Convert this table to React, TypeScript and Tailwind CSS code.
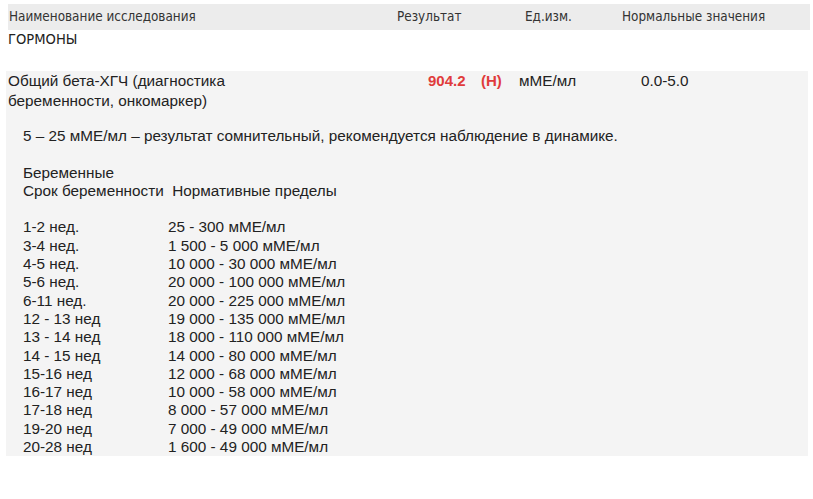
import React from "react";

const rows: [string, string][] = [
  ["1-2 нед.", "25 - 300 мМЕ/мл"],
  ["3-4 нед.", "1 500 - 5 000 мМЕ/мл"],
  ["4-5 нед.", "10 000 - 30 000 мМЕ/мл"],
  ["5-6 нед.", "20 000 - 100 000 мМЕ/мл"],
  ["6-11 нед.", "20 000 - 225 000 мМЕ/мл"],
  ["12 - 13 нед", "19 000 - 135 000 мМЕ/мл"],
  ["13 - 14 нед", "18 000 - 110 000 мМЕ/мл"],
  ["14 - 15 нед", "14 000 - 80 000 мМЕ/мл"],
  ["15-16 нед", "12 000 - 68 000 мМЕ/мл"],
  ["16-17 нед", "10 000 - 58 000 мМЕ/мл"],
  ["17-18 нед", "8 000 - 57 000 мМЕ/мл"],
  ["19-20 нед", "7 000 - 49 000 мМЕ/мл"],
  ["20-28 нед", "1 600 - 49 000 мМЕ/мл"],
];

export default function App() {
  const narrow = { fontFamily: '"DejaVu Sans Condensed", "Liberation Sans Narrow", sans-serif' };
  return (
    <div className="w-[813px] h-[499px] bg-white pt-[4px] text-[#222]">
      <div
        className="ml-[8px] w-[802px] h-[26px] bg-[#ececec] flex items-center text-[13.4px] text-[#333]"
        style={narrow}
      >
        <div className="w-[389px] pl-[1px]">Наименование исследования</div>
        <div className="w-[128px]">Результат</div>
        <div className="w-[97px]">Ед.изм.</div>
        <div>Нормальные значения</div>
      </div>
      <div className="pl-[8px] h-[18px] leading-[18px] text-[14.6px]" style={narrow}>
        ГОРМОНЫ
      </div>
      <div
        className="mt-[23px] ml-[6px] w-[802px] h-[385px] bg-[#f4f4f4] text-[15.3px]"
        style={{ fontFamily: '"Liberation Sans", Arial, sans-serif' }}
      >
        <div className="flex leading-[20px]">
          <div className="w-[422px] pl-[2px]">
            Общий бета-ХГЧ (диагностика
            <br />
            беременности, онкомаркер)
          </div>
          <div className="w-[91px] flex font-bold text-[#e03b3b] text-[15px]">
            <span className="w-[53px]">904.2</span>
            <span>(Н)</span>
          </div>
          <div className="w-[122px]">мМЕ/мл</div>
          <div>0.0-5.0</div>
        </div>
        <div className="pl-[17px] mt-[16px] leading-[18.3px]">
          <div>5 – 25 мМЕ/мл – результат сомнительный, рекомендуется наблюдение в динамике.</div>
          <div className="h-[18.3px]" />
          <div>Беременные</div>
          <div className="whitespace-pre">Срок беременности  Нормативные пределы</div>
          <div className="h-[18.3px]" />
          {rows.map(([a, b]) => (
            <div key={a} className="flex">
              <div className="w-[145px]">{a}</div>
              <div>{b}</div>
            </div>
          ))}
        </div>
      </div>
    </div>
  );
}
